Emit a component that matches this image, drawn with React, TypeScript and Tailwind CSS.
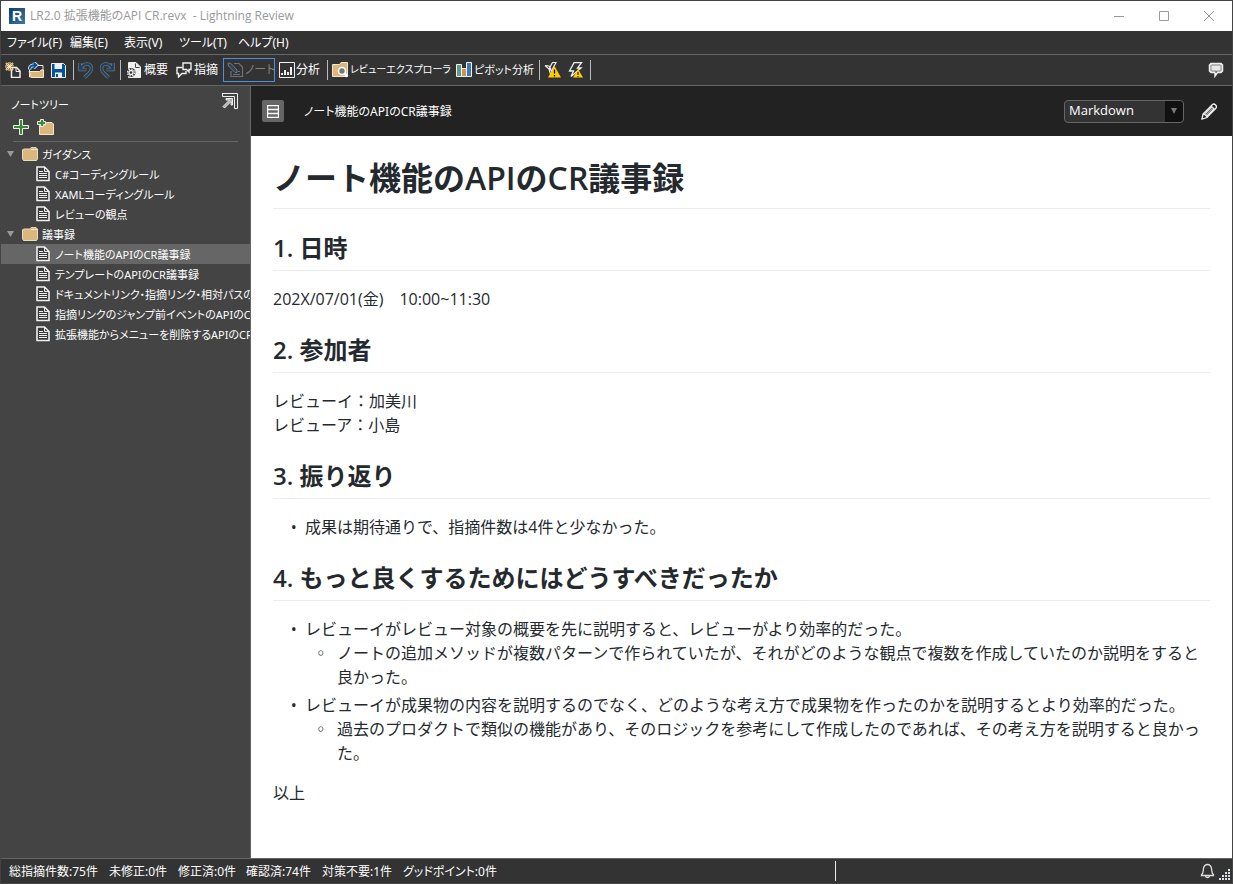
import React, { useState } from "react";

const DocIcon = () => (
  <svg width="14" height="16" viewBox="0 0 14 16" fill="none" className="shrink-0">
    <path d="M1 1h7.500l4.500 4.500v9H1z" fill="#3a3a3a" stroke="#f0f0f0" strokeWidth="1.600" />
    <path d="M8.500 1v4.500H13" stroke="#f0f0f0" />
    <path d="M3 5.500h4M3 7.500h8M3 9.500h8M3 11.500h8" stroke="#f0f0f0" />
  </svg>
);

const FolderIcon = () => (
  <svg width="16" height="14" viewBox="0 0 16 14" className="shrink-0">
    <path d="M.5 3 1.500 2h6L9.500.5h4.500l1.500 1.500v10l-1 1.500h-13l-1-1.500z" fill="#dcb67a" stroke="#e8dcc5" />
    <path d="M9 2.500h6" stroke="#f0e6d2" />
  </svg>
);

const NewFileIcon = () => (
  <svg width="16" height="16" viewBox="0 0 16 16" fill="none">
    <path d="M6.500 5.500h5l3.500 3.500v6.500h-8.500z" fill="#333" stroke="#f0f0f0" strokeWidth="1.500" />
    <path d="M11 5.500v4h4" stroke="#f0f0f0" />
    <path d="M4.500 0v9M0 4.500h9M1 1l7 7M8 1l-7 7" stroke="#f3e2c5" strokeWidth="2" />
    <path d="M4.500 0v9M0 4.500h9M1.500 1.500l6 6M7.500 1.500l-6 6" stroke="#c27d1a" />
    <circle cx="4.500" cy="4.500" r="1.500" fill="#fff" />
  </svg>
);

const OpenIcon = () => (
  <svg width="17" height="16" viewBox="0 0 17 16" fill="none">
    <path d="M1.500 5v10h13.500V3.500H8" fill="#333" stroke="#f0f0f0" />
    <path d="M3.500 15.500 1 9.500h10.500l1.500-1.500h2.500v7.500z" fill="#dcb67a" stroke="#f5e8cf" />
    <path d="M1.500 7.500C1.500 4.500 4 3 8 3M5.500.5 8.500 3 5.500 6" stroke="#f0f0f0" strokeWidth="3.400" />
    <path d="M1.500 7.500C1.500 4.500 4 3 8 3M5.500.5 8.500 3 5.500 6" stroke="#00539c" strokeWidth="1.800" />
  </svg>
);

const SaveIcon = () => (
  <svg width="15" height="15" viewBox="0 0 15 15">
    <path d="M.5.5h12l2 2v12H.5z" fill="#00539c" stroke="#f0f0f0" />
    <path d="M3.500 1h7.500v5H3.500z" fill="#f0f0f0" />
    <path d="M4 9.500h7V14H4z" fill="#f0f0f0" />
    <path d="M5 11h2v3H5z" fill="#00539c" />
  </svg>
);

const UndoIcon = ({ flip = false }: { flip?: boolean }) => (
  <svg width="15" height="17" viewBox="0 0 15 17" fill="none" className={flip ? "-scale-x-100" : ""}>
    <path d="M2 1v6.500h6.500M2.500 7C4 3.500 6.500 2 9 2c3 0 4.500 2 4.500 4.500C13.500 10 10 12 6.500 15.500" stroke="#6d7073" strokeWidth="3.600" />
    <path d="M2 1v6.500h6.500M2.500 7C4 3.500 6.500 2 9 2c3 0 4.500 2 4.500 4.500C13.500 10 10 12 6.500 15.500" stroke="#1d4468" strokeWidth="2" />
  </svg>
);

const OverviewIcon = () => (
  <svg width="16" height="16" viewBox="0 0 16 16" fill="none" className="shrink-0">
    <path d="M2.500.5H10l4.500 4.500v10.500h-12z" fill="#f0f0f0" stroke="#f0f0f0" />
    <path d="M9.500 1.500v4h4" stroke="#444" />
    <circle cx="5" cy="10.500" r="4.500" fill="#333" />
    <circle cx="5" cy="10.500" r="3.500" stroke="#f0f0f0" strokeWidth="1.200" strokeDasharray="1.600 1.100" />
    <circle cx="5" cy="10.500" r="2" stroke="#f0f0f0" strokeWidth="1.400" />
  </svg>
);

const CommentsIcon = () => (
  <svg width="16" height="16" viewBox="0 0 16 16" fill="none" stroke="#f0f0f0" strokeWidth="1.400" className="shrink-0">
    <path d="M7 1h8v6.500h-2V10l-2.500-2.500H7z" />
    <path d="M6.500 5.500H1v6h1.500V15L6 11.500h4V9" />
  </svg>
);

const NoteIcon = () => (
  <svg width="17" height="16" viewBox="0 0 17 16" fill="none" className="shrink-0">
    <path d="M7 1.500h5l3.500 3.500v9.500H4V9M6 12.500h7M11 9.500h2" stroke="#717171" strokeWidth="1.200" />
    <path d="M1 1l3 .5 6 6.500v2.500H8L1.500 4z" fill="#234767" stroke="#777" />
  </svg>
);

const ChartIcon = () => (
  <svg width="16" height="16" viewBox="0 0 16 16" className="shrink-0">
    <path d="M.5.5h15v15H.5z" fill="none" stroke="#f0f0f0" />
    <path d="M2 11h2v2H2zM5 8h2v5H5zM8 10h2v3H8zM11 5h2v8h-2z" fill="#f0f0f0" />
  </svg>
);

const ExplorerIcon = () => (
  <svg width="17" height="16" viewBox="0 0 17 16" className="shrink-0">
    <path d="M.5 2.500h7L9 .500h6.500v14H.5z" fill="#dcb67a" stroke="#f0e6d2" />
    <circle cx="10" cy="9" r="3.500" fill="#777" stroke="#fff" strokeWidth="1.600" />
    <path d="M12.500 11.500l3 3" stroke="#fff" strokeWidth="2.500" />
  </svg>
);

const PivotIcon = () => (
  <svg width="16" height="16" viewBox="0 0 16 16" stroke="#f0f0f0" className="shrink-0">
    <path d="M.5 2.500h5v12h-5z" fill="#5f9a85" />
    <path d="M5.500 6.500h5v8h-5z" fill="#c8945a" />
    <path d="M10.500.500h5v14h-5z" fill="#3f78b5" />
  </svg>
);

const WarningIcon = () => (
  <svg width="17" height="16" viewBox="0 0 17 16" fill="none">
    <path d="M1 3.500l4 3.500 1.500 5M1 3.500 5 4l2 3M12 .5H8.500L5.500 6l2 3L12 .5z" stroke="#f0f0f0" strokeWidth="1.200" />
    <path d="M10.500 4 17 15.500H4z" fill="#ffcc00" />
    <path d="M10.500 7.500v4M10.500 13v1.500" stroke="#000" strokeWidth="1.200" />
  </svg>
);

const LightningIcon = () => (
  <svg width="16" height="16" viewBox="0 0 16 16" fill="none">
    <path d="M6 .7h7.500L9.500 6H13L3 14.500 5.500 9H1.500z" fill="#333" stroke="#f0f0f0" strokeWidth="1.300" />
    <path d="M10 7l5 8.500H5z" fill="#ffcc00" />
    <path d="M10 10v3M10 14v1" stroke="#000" />
  </svg>
);

const Separator = () => <span className="h-5 w-px shrink-0 bg-[#b8bcc0]" />;

const menus = [
  { label: "ファイル(F)", width: "w-[63px]" },
  { label: "編集(E)", width: "w-[54px]" },
  { label: "表示(V)", width: "w-[55px]" },
  { label: "ツール(T)", width: "w-[59px]" },
  { label: "ヘルプ(H)", width: "w-[60px]" },
];

const tree = [
  {
    name: "ガイダンス",
    notes: ["C#コーディングルール", "XAMLコーディングルール", "レビューの観点"],
  },
  {
    name: "議事録",
    notes: [
      "ノート機能のAPIのCR議事録",
      "テンプレートのAPIのCR議事録",
      "ドキュメントリンク・指摘リンク・相対パスのAPIのCR議事録",
      "指摘リンクのジャンプ前イベントのAPIのCR議事録",
      "拡張機能からメニューを削除するAPIのCR議事録",
    ],
  },
];

const stats = [
  { label: "総指摘件数:75件", width: "w-[100px]" },
  { label: "未修正:0件", width: "w-[69px]" },
  { label: "修正済:0件", width: "w-[68px]" },
  { label: "確認済:74件", width: "w-[76px]" },
  { label: "対策不要:1件", width: "w-[81px]" },
  { label: "グッドポイント:0件", width: "w-[90px]" },
];

const TitleBar = () => (
  <header className="flex h-[30px] shrink-0 items-center bg-white pl-2">
    <span className="flex size-4 items-center justify-center bg-linear-to-br from-[#123a68] to-[#3d78a8] font-['Liberation_Sans',sans-serif] text-sm font-bold text-white">
      R
    </span>
    <h1 className="ml-[5px] whitespace-pre font-['Open_Sans','Noto_Sans_CJK_JP',sans-serif] text-xs text-[#999]">
      LR2.0 拡張機能のAPI CR.revx  - Lightning Review
    </h1>
    <div className="ml-auto flex">
      <button type="button" aria-label="Minimize" className="flex h-7 w-[45px] items-center justify-center">
        <svg width="10" height="10"><path d="M0 5.500h10" stroke="#999" /></svg>
      </button>
      <button type="button" aria-label="Maximize" className="flex h-7 w-[45px] items-center justify-center">
        <svg width="10" height="10" fill="none"><path d="M.5.5h9v9h-9z" stroke="#999" /></svg>
      </button>
      <button type="button" aria-label="Close" className="flex h-7 w-[46px] items-center justify-center">
        <svg width="10" height="10"><path d="M0 0l10 10M10 0L0 10" stroke="#999" /></svg>
      </button>
    </div>
  </header>
);

const Toolbar = () => (
  <div className="flex h-8 shrink-0 items-center whitespace-nowrap border-y border-[#666] pl-1 text-xs">
    <button type="button" aria-label="新規" className="w-[23px]"><NewFileIcon /></button>
    <button type="button" aria-label="開く" className="w-[23px]"><OpenIcon /></button>
    <button type="button" aria-label="保存" className="w-[22px]"><SaveIcon /></button>
    <Separator />
    <button type="button" aria-label="元に戻す" className="ml-1 w-[22px]"><UndoIcon /></button>
    <button type="button" aria-label="やり直し" className="w-5"><UndoIcon flip /></button>
    <Separator />
    <button type="button" className="ml-[5px] flex w-[50px] items-center gap-0.5"><OverviewIcon />概要</button>
    <button type="button" className="flex w-[47px] items-center gap-0.5"><CommentsIcon />指摘</button>
    <button type="button" className="flex h-6 w-[52px] items-center gap-px border border-[#4a90e2] pl-[3px] text-[#808080]">
      <NoteIcon />ノート
    </button>
    <button type="button" className="ml-1 flex w-12 items-center gap-px"><ChartIcon />分析</button>
    <Separator />
    <button type="button" className="ml-1 flex w-[124px] items-center gap-px text-[10px]"><ExplorerIcon />レビューエクスプローラ</button>
    <button type="button" className="flex w-[83px] items-center gap-0.5 text-[11px]"><PivotIcon />ピボット分析</button>
    <Separator />
    <button type="button" aria-label="警告" className="ml-1 w-6"><WarningIcon /></button>
    <button type="button" aria-label="即時警告" className="w-[22px]"><LightningIcon /></button>
    <Separator />
    <button type="button" aria-label="コメント" className="ml-auto mr-2">
      <svg width="16" height="16" viewBox="0 0 16 16">
        <path d="M3 1.500h10l1.500 1.500v6L13 10.500H9.500L7 14v-3.500H3L1.500 9V3z" fill="#e4e4e4" stroke="#f0f0f0" strokeWidth="1.500" />
        <path d="M3.500 3h9l.5.500v5l-.5.500H8.500L8 11V9H3.500L3 8.500v-5z" fill="#e8e8e8" stroke="#555" strokeWidth=".7" />
      </svg>
    </button>
  </div>
);

const Sidebar = () => {
  const [selected, setSelected] = useState("ノート機能のAPIのCR議事録");

  return (
    <aside className="flex w-[250px] shrink-0 flex-col border-r border-[#666] bg-[#444] text-[11px]">
      <div className="flex h-[30px] items-center justify-between pl-[10px] pr-3">
        <h2 className="pt-2">ノートツリー</h2>
        <button type="button" aria-label="ポップアウト">
          <svg width="16" height="16" viewBox="0 0 16 16" fill="none" stroke="#f0f0f0">
            <path d="M0 .5h15.500V15.500h-3M.5 0v3.500h12v12" />
            <path d="M1 13.500 7.500 7H4V5.500h6.500V12H9V8.500l-6.500 6.500z" fill="#aaa" />
          </svg>
        </button>
      </div>
      <div className="ml-3 mr-3 flex h-[26px] items-center gap-2 border-b border-[#666] pb-1">
        <button type="button" aria-label="ノートを追加">
          <svg width="16" height="16" viewBox="0 0 16 16">
            <path d="M6.500.5h3v6h6v3h-6v6h-3v-6h-6v-3h6z" fill="#388a34" stroke="#f0f0f0" />
          </svg>
        </button>
        <button type="button" aria-label="フォルダを追加">
          <svg width="17" height="16" viewBox="0 0 17 16">
            <path d="M2.500 6.500 5 4.500h3L10 3.500h5l1.500 1.500v10.500h-14z" fill="#dcb67a" stroke="#f0e6d2" />
            <path d="M3.500.5h3v2h2v3h-2v2h-3v-2h-3v-3h3z" fill="#388a34" stroke="#f0f0f0" />
          </svg>
        </button>
      </div>
      <ul className="mt-0.5 overflow-hidden whitespace-nowrap">
        {tree.map((folder) => (
          <li key={folder.name}>
            <div className="flex h-5 items-center pl-1.5">
              <svg width="8" height="7" className="mr-[7px]"><path d="M0 0h7L3.500 6z" fill="#999" /></svg>
              <FolderIcon />
              <span className="ml-1 pt-0.5">{folder.name}</span>
            </div>
            <ul>
              {folder.notes.map((note) => (
                <li key={note}>
                  <button
                    type="button"
                    onClick={() => setSelected(note)}
                    className={`flex h-5 w-full items-center gap-[5px] pl-[35px] ${selected === note ? "bg-[#666]" : ""}`}
                  >
                    <DocIcon />
                    <span className="pt-0.5">{note}</span>
                  </button>
                </li>
              ))}
            </ul>
          </li>
        ))}
      </ul>
    </aside>
  );
};

const NoteHeader = () => (
  <div className="flex h-[50px] shrink-0 items-center bg-[#222] pl-[11px] pr-[14px] text-xs">
    <button type="button" aria-label="一覧" className="flex size-[22px] items-center justify-center rounded-xs bg-[#666]">
      <svg width="12" height="13" fill="none" stroke="#fff">
        <path d="M.5.5h11v12H.5zM0 4.500h12M0 8.500h12" strokeWidth="1.400" />
      </svg>
    </button>
    <span className="ml-5 pt-0.5">ノート機能のAPIのCR議事録</span>
    <div className="relative ml-auto">
      <select
        aria-label="形式"
        className="block h-[23px] w-[120px] appearance-none rounded-sm border border-[#666] bg-[#333] pl-1 font-['Open_Sans',sans-serif] text-[13px] text-white"
      >
        <option>Markdown</option>
      </select>
      <span className="pointer-events-none absolute inset-y-px right-px flex w-[18px] items-center justify-center rounded-r-sm bg-[#111]">
        <svg width="6" height="6"><path d="M0 0h6L3 6z" fill="#777" /></svg>
      </span>
    </div>
    <button type="button" aria-label="編集" className="ml-[17px]">
      <svg width="17" height="17" viewBox="0 0 17 17" fill="none" stroke="#f0f0f0" strokeWidth="1.300">
        <path d="M1 16l1-5L11.500 1.500c2-1.500 5 1.500 3.500 3.500L6 14.500z" />
        <path d="M10 3l4 4M2 11c2 0 4 2 4 3.500M4 10.500l7-7M6 13l7-7" />
        <path d="M5 12l7-7" stroke="#aaa" />
      </svg>
    </button>
  </div>
);

const Heading = ({ children }: { children: React.ReactNode }) => (
  <h3 className="mt-6 mb-4 border-b border-[#eaecef] pb-[7px] text-2xl/[30px] font-semibold">{children}</h3>
);

const NoteBody = () => (
  <article className="grow bg-white px-[22px] pt-[22px] pb-8 font-['Open_Sans','Noto_Sans_CJK_JP',sans-serif] text-base/6 text-[#24292e] [font-feature-settings:normal]">
    <h2 className="mb-4 border-b border-[#eaecef] pb-[10px] text-[32px]/10 font-semibold">ノート機能のAPIのCR議事録</h2>
    <Heading>1. 日時</Heading>
    <p>202X/07/01(金)　10:00~11:30</p>
    <Heading>2. 参加者</Heading>
    <p>
      レビューイ：加美川
      <br />
      レビューア：小島
    </p>
    <Heading>3. 振り返り</Heading>
    <ul className="list-['•__'] pl-8">
      <li>成果は期待通りで、指摘件数は4件と少なかった。</li>
    </ul>
    <Heading>4. もっと良くするためにはどうすべきだったか</Heading>
    <ul className="mb-4 list-['•__'] space-y-1 pl-8">
      <li>
        レビューイがレビュー対象の概要を先に説明すると、レビューがより効率的だった。
        <ul className="list-['◦__'] pl-8">
          <li>ノートの追加メソッドが複数パターンで作られていたが、それがどのような観点で複数を作成していたのか説明をすると良かった。</li>
        </ul>
      </li>
      <li>
        レビューイが成果物の内容を説明するのでなく、どのような考え方で成果物を作ったのかを説明するとより効率的だった。
        <ul className="list-['◦__'] pl-8">
          <li>過去のプロダクトで類似の機能があり、そのロジックを参考にして作成したのであれば、その考え方を説明すると良かった。</li>
        </ul>
      </li>
    </ul>
    <p>以上</p>
  </article>
);

const StatusBar = () => (
  <footer className="flex h-[25px] shrink-0 items-center border-t border-[#666] pl-2 text-xs">
    <div className="flex grow whitespace-nowrap pt-0.5">
      {stats.map((s) => (
        <span key={s.label} className={s.width}>{s.label}</span>
      ))}
    </div>
    <span className="h-5 w-px bg-[#eee]" />
    <div className="flex w-[396px] items-center justify-end gap-1 pr-px">
      <svg width="15" height="16" viewBox="0 0 15 16" fill="none" stroke="#ddd" strokeWidth="1.300">
        <path d="M1.500 11.500c2-1 1.500-3 2-6C4 3 5.500 1.500 7.500 1.500S11 3 11.500 5.500c.5 3 0 5 2 6v1h-12z" />
        <path d="M5.500 13c.5 2 3.500 2 4 0" />
      </svg>
      <svg width="12" height="12" viewBox="0 0 12 12" fill="#e0e4ea" className="mt-2">
        <path d="M9 0h2v2H9zM6 3h2v2H6zM9 3h2v2H9zM3 6h2v2H3zM6 6h2v2H6zM9 6h2v2H9zM0 9h2v2H0zM3 9h2v2H3zM6 9h2v2H6zM9 9h2v2H9z" />
      </svg>
    </div>
  </footer>
);

const App = () => {
  return (
    <div className="flex min-h-screen flex-col border border-[#444] bg-[#333] font-['Noto_Sans','Noto_Sans_CJK_JP',sans-serif] text-white [font-feature-settings:'palt']">
      <TitleBar />
      <nav className="flex h-[23px] shrink-0 items-center whitespace-nowrap pl-1.5 text-xs">
        {menus.map((m) => (
          <button key={m.label} type="button" className={`text-left ${m.width}`}>{m.label}</button>
        ))}
      </nav>
      <Toolbar />
      <div className="flex grow">
        <Sidebar />
        <main className="flex min-w-0 grow flex-col">
          <NoteHeader />
          <NoteBody />
        </main>
      </div>
      <StatusBar />
    </div>
  );
};

export default App;
